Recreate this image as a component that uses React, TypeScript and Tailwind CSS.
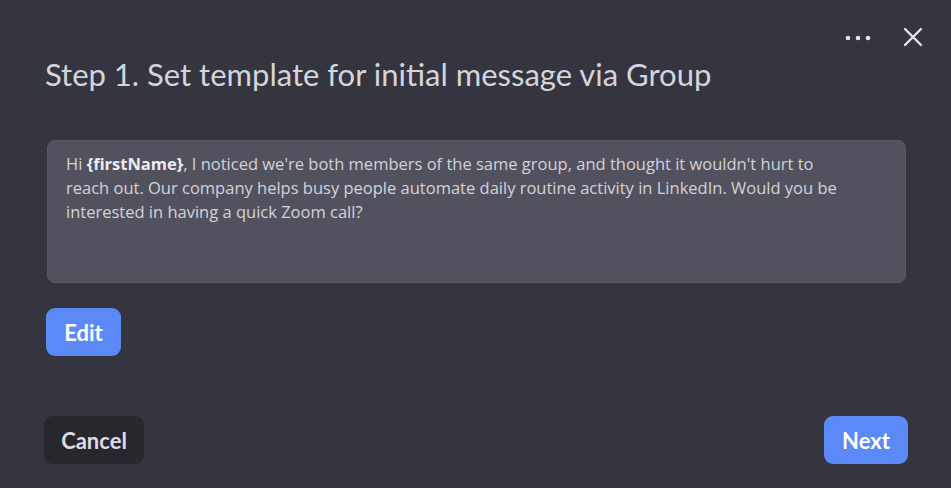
import React from "react";

export default function App() {
  return (
    <div className="h-[488px] w-full bg-[#35353f] px-[45px] flex flex-col overflow-hidden">
      <div className="flex justify-end items-center gap-[32px] pt-[27px] -mr-[17px] h-[47px]">
        <svg width="26" height="6" viewBox="0 0 26 6" className="mt-[1px]">
          <circle cx="3" cy="3" r="2.3" fill="#e4e4ea" />
          <circle cx="13" cy="3" r="2.3" fill="#e4e4ea" />
          <circle cx="23" cy="3" r="2.3" fill="#e4e4ea" />
        </svg>
        <svg width="20" height="20" viewBox="0 0 20 20">
          <path d="M2 2 L18 18 M18 2 L2 18" stroke="#e4e4ea" strokeWidth="2.4" strokeLinecap="round" />
        </svg>
      </div>
      <h1
        className="text-[31px] leading-[38px] text-[#d4d4dc] mt-[8px]"
        style={{ fontFamily: "Lato, 'Noto Sans', sans-serif" }}
      >
        Step 1. Set template for initial message via Group
      </h1>
      <div
        className="mt-[47px] ml-[2px] h-[143px] rounded-[8px] bg-[#52525e] border border-[#5a5a66] px-[18px] pt-[11px] text-[16.5px] leading-[24px] text-[#d2d2da] whitespace-nowrap"
        style={{ fontFamily: "'Open Sans', 'Noto Sans', sans-serif" }}
      >
        <span className="block">
          Hi <span className="font-bold text-[#ececf2]">{"{firstName}"}</span>, I noticed we're both members of the same group, and thought it wouldn't hurt to
        </span>
        <span className="block">
          reach out. Our company helps busy people automate daily routine activity in LinkedIn. Would you be
        </span>
        <span className="block">interested in having a quick Zoom call?</span>
      </div>
      <div className="mt-[25px] ml-[1px]">
        <button
          className="h-[48px] w-[75px] rounded-[9px] bg-[#5b89f7] text-white text-[22px] font-bold"
          style={{ fontFamily: "Lato, 'Noto Sans', sans-serif" }}
        >
          Edit
        </button>
      </div>
      <div className="flex-1" />
      <div className="flex justify-between items-center pb-[24px] -mr-[2px] -ml-[1px]">
        <button
          className="h-[48px] w-[100px] rounded-[9px] bg-[#27272d] text-[#dcdce2] text-[22px] font-bold"
          style={{ fontFamily: "Lato, 'Noto Sans', sans-serif" }}
        >
          Cancel
        </button>
        <button
          className="h-[48px] w-[84px] rounded-[9px] bg-[#5b89f7] text-white text-[22px] font-bold"
          style={{ fontFamily: "Lato, 'Noto Sans', sans-serif" }}
        >
          Next
        </button>
      </div>
    </div>
  );
}
